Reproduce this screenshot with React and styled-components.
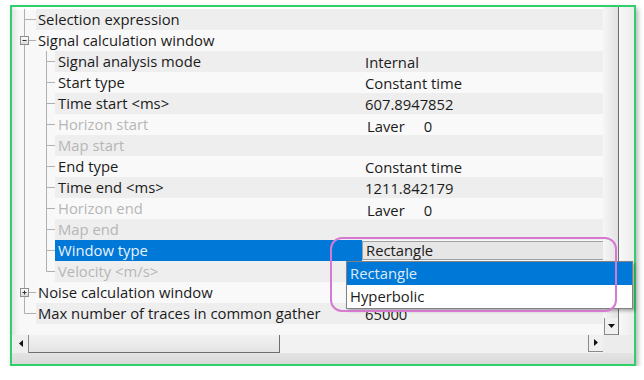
import React from "react";
import styled, { createGlobalStyle } from "styled-components";

const GlobalStyle = createGlobalStyle`
  html, body {
    margin: 0;
    padding: 0;
    background: #ffffff;
  }
  body {
    font-family: "Open Sans", "Noto Sans", sans-serif;
  }
`;

const rows = [
  { level: 1, name: "Selection expression" },
  { level: 1, name: "Signal calculation window", expander: "minus" },
  { level: 2, name: "Signal analysis mode", value: "Internal" },
  { level: 2, name: "Start type", value: "Constant time" },
  { level: 2, name: "Time start <ms>", value: "607.8947852" },
  { level: 2, name: "Horizon start", layer: "0", disabled: true },
  { level: 2, name: "Map start", disabled: true },
  { level: 2, name: "End type", value: "Constant time" },
  { level: 2, name: "Time end <ms>", value: "1211.842179" },
  { level: 2, name: "Horizon end", layer: "0", disabled: true },
  { level: 2, name: "Map end", disabled: true },
  { level: 2, name: "Window type", value: "Rectangle", selected: true, editor: true },
  { level: 2, name: "Velocity <m/s>", disabled: true, lastChild: true },
  { level: 1, name: "Noise calculation window", expander: "plus" },
  { level: 1, name: "Max number of traces in common gather", value: "65000", last: true },
];

const LINE = "#b0b0b0";

// tree connector lines drawn per row
const Gutter = ({ level, expander, last, lastChild }) => {
  const w = level === 1 ? 24 : 43;
  return (
    <GutterSvg width={w} height={21}>
      <line x1="12.5" y1="0" x2="12.5" y2={last ? 10.5 : 21} stroke={LINE} />
      {level === 1 && (
        <line x1={expander ? 17 : 12.5} y1="10.5" x2="24" y2="10.5" stroke={LINE} />
      )}
      {level === 2 && (
        <>
          <line x1="34.5" y1="0" x2="34.5" y2={lastChild ? 10.5 : 21} stroke={LINE} />
          <line x1="34.5" y1="10.5" x2="43" y2="10.5" stroke={LINE} />
        </>
      )}
      {expander && (
        <>
          <defs>
            <linearGradient id={`exp-${expander}`} x1="0" y1="0" x2="0" y2="1">
              <stop offset="0" stopColor="#ffffff" />
              <stop offset="1" stopColor="#d8d8d8" />
            </linearGradient>
          </defs>
          <rect
            x="8.5"
            y="6.5"
            width="8"
            height="8"
            fill={`url(#exp-${expander})`}
            stroke="#8e8e8e"
          />
          <line x1="10.5" y1="10.5" x2="14.5" y2="10.5" stroke="#333" />
          {expander === "plus" && (
            <line x1="12.5" y1="8.5" x2="12.5" y2="12.5" stroke="#333" />
          )}
        </>
      )}
    </GutterSvg>
  );
};

const App = () => {
  return (
    <>
      <GlobalStyle />
      <Frame>
        <Main>
          <TreePane>
            {rows.map((row, i) => (
              <Row key={row.name}>
                <Gutter {...row} />
                <Cells $band={i % 2 === 0}>
                  <Name
                    $level={row.level}
                    $disabled={row.disabled}
                    $selected={row.selected}
                  >
                    {row.name}
                  </Name>
                  <Value>
                    {row.editor ? (
                      <Editor>{row.value}</Editor>
                    ) : row.layer ? (
                      <LayerValue>
                        <span>Laver</span>
                        <span>{row.layer}</span>
                      </LayerValue>
                    ) : (
                      <ValueText>{row.value}</ValueText>
                    )}
                  </Value>
                </Cells>
              </Row>
            ))}
          </TreePane>
          <VScroll>
            <ArrowButton $side="down">
              <svg width="8" height="5">
                <polygon points="0,0 7,0 3.5,4" fill="#111" />
              </svg>
            </ArrowButton>
          </VScroll>
          <RightBevel />
        </Main>
        <HScrollRow>
          <LeftButton>
            <svg width="5" height="8">
              <polygon points="4,0 4,7 0,3.5" fill="#111" />
            </svg>
          </LeftButton>
          <Thumb />
          <Track />
          <ArrowButton $side="right">
            <svg width="5" height="8">
              <polygon points="0,0 4,3.5 0,7" fill="#111" />
            </svg>
          </ArrowButton>
          <Corner />
        </HScrollRow>
        <BottomBevel />

        <DropList>
          <ListItem $active>Rectangle</ListItem>
          <ListItem>Hyperbolic</ListItem>
        </DropList>
        <Annotation />
      </Frame>
    </>
  );
};

const Frame = styled.div`
  position: relative;
  box-sizing: border-box;
  width: 626px;
  height: 361px;
  margin: 5px 0 0 10px;
  border: 2px solid #2fcf6a;
  display: flex;
  flex-direction: column;
  background: #f4f4f4;
  box-shadow: 2px 3px 5px rgba(0, 0, 0, 0.3);
  font-size: 14.8px;
  color: #1b1b1b;
`;

const Main = styled.div`
  display: flex;
  height: 328px;
`;

const TreePane = styled.div`
  flex: 1;
  padding-top: 2px;
  overflow: hidden;
  background: #f8f8f8;
  box-shadow: inset 7px 0 6px -5px rgba(0, 0, 0, 0.12),
    inset 0 3px 0 #ffffff;
`;

const Row = styled.div`
  display: flex;
  height: 21px;
`;

const GutterSvg = styled.svg`
  flex: none;
  display: block;
`;

const Cells = styled.div`
  flex: 1;
  display: flex;
  background: ${(p) => (p.$band ? "#eeeeee" : "#f9f9f9")};
`;

const Name = styled.div`
  flex: 1;
  padding-left: ${(p) => (p.$level === 1 ? 2 : 3)}px;
  line-height: 21px;
  white-space: nowrap;
  background: ${(p) => (p.$selected ? "#0078d7" : "transparent")};
  color: ${(p) =>
    p.$selected ? "#eaf2fc" : p.$disabled ? "#b6b6b6" : "#1b1b1b"};
`;

const Value = styled.div`
  width: 241px;
  flex: none;
  display: flex;
  align-items: center;
`;

const ValueText = styled.span`
  padding-left: 3px;
  white-space: nowrap;
`;

const LayerValue = styled.span`
  display: flex;
  gap: 19px;
  padding: 3px 0 0 5px;
`;

const Editor = styled.div`
  box-sizing: border-box;
  width: 100%;
  height: 19px;
  line-height: 17px;
  padding-left: 3px;
  background: #e6e6e6;
  border: 1px solid #a0a0a0;
  border-right: none;
`;

const VScroll = styled.div`
  width: 15px;
  border-right: 1px solid #6e6e6e;
  display: flex;
  flex-direction: column;
  justify-content: flex-end;
  background: linear-gradient(to right, #f6f6f6, #e2e2e2);
`;

const ArrowButton = styled.div`
  box-sizing: border-box;
  width: ${(p) => (p.$side === "down" ? 14 : 15)}px;
  height: 17px;
  margin-left: ${(p) => (p.$side === "down" ? 1 : 0)}px;
  display: flex;
  align-items: center;
  justify-content: center;
  border-left: 1px solid #8a8a8a;
  border-bottom: 1px solid #8a8a8a;
  background: #f0f0f0;
`;

const RightBevel = styled.div`
  width: 15px;
  background: linear-gradient(to right, #f8f8f8, #ececec);
`;

const HScrollRow = styled.div`
  display: flex;
  height: 18px;
`;

const LeftButton = styled.div`
  width: 17px;
  border-right: 1px solid #8a8a8a;
  display: flex;
  align-items: center;
  justify-content: center;
  padding-left: 2px;
  box-sizing: border-box;
  background: #efefef;
`;

const Thumb = styled.div`
  width: 250px;
  border-right: 1px solid #6e6e6e;
  border-bottom: 1px solid #6e6e6e;
  background: linear-gradient(#f2f2f2, #e4e4e4);
`;

const Track = styled.div`
  flex: 1;
  background: #f2f2f2;
`;

const Corner = styled.div`
  width: 31px;
  background: #ececec;
`;

const BottomBevel = styled.div`
  flex: 1;
  background: linear-gradient(#e4e4e4, #d9d9d9);
`;

const DropList = styled.div`
  position: absolute;
  left: 334px;
  top: 254px;
  width: 287px;
  box-sizing: border-box;
  border: 1px solid #828282;
  background: #ffffff;
  box-shadow: 2px 2px 3px rgba(0, 0, 0, 0.3);
  z-index: 2;
`;

const ListItem = styled.div`
  height: 23px;
  line-height: 23px;
  padding-left: 3px;
  background: ${(p) => (p.$active ? "#0078d7" : "#ffffff")};
  color: ${(p) => (p.$active ? "#dfeaf8" : "#1b1b1b")};
`;

const Annotation = styled.div`
  position: absolute;
  left: 318px;
  top: 230px;
  width: 287px;
  height: 75px;
  box-sizing: border-box;
  border: 2px solid #d57ad0;
  border-radius: 12px;
  z-index: 3;
  pointer-events: none;
`;

export default App;
